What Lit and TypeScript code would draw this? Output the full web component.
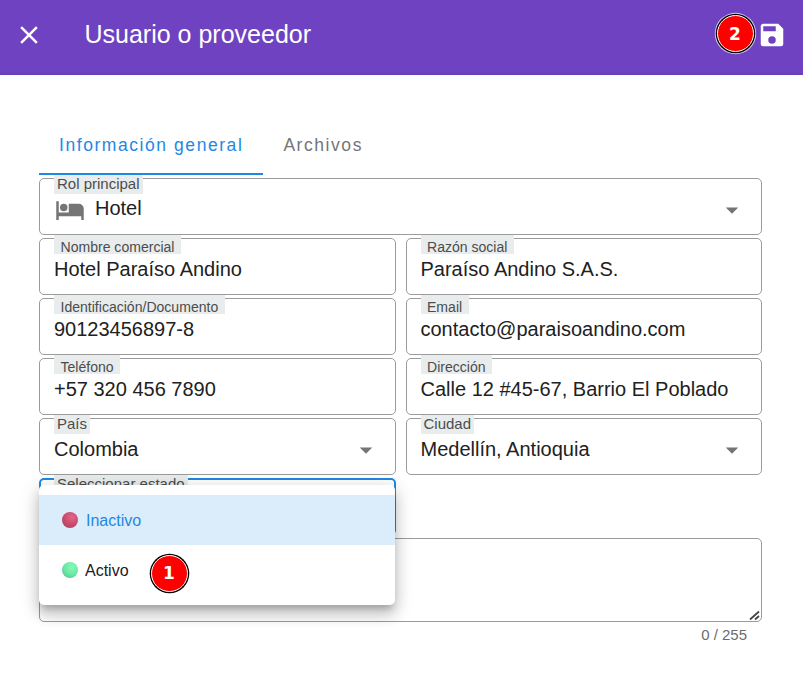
import { LitElement, html, css, svg } from "lit";
import { customElement, property } from "lit/decorators.js";
import { classMap } from "lit/directives/class-map.js";

const CLOSE =
  "M19,6.41L17.59,5L12,10.59L6.41,5L5,6.41L10.59,12L5,17.59L6.41,19L12,13.41L17.59,19L19,17.59L13.41,12L19,6.41Z";
const SAVE =
  "M15,9H5V5H15M12,19A3,3 0 0,1 9,16A3,3 0 0,1 12,13A3,3 0 0,1 15,16A3,3 0 0,1 12,19M17,3H5C3.89,3 3,3.9 3,5V19A2,2 0 0,0 5,21H19A2,2 0 0,0 21,19V7L17,3Z";
const BED =
  "M19,7H11V14H3V5H1V20H3V17H21V20H23V11A4,4 0 0,0 19,7M7,13A3,3 0 0,0 10,10A3,3 0 0,0 7,7A3,3 0 0,0 4,10A3,3 0 0,0 7,13Z";
const MENU_DOWN = "M7,10L12,15L17,10H7Z";

const icon = (d: string) =>
  html`<svg class="icon" width="30" height="30" viewBox="0 0 24 24">${svg`<path fill="currentColor" d=${d}></path>`}</svg>`;

@customElement("form-field")
class FormField extends LitElement {
  @property() label = "";
  @property() value = "";
  @property() icon = "";
  @property({ type: Boolean }) select = false;
  @property({ type: Boolean }) focused = false;

  static styles = css`
    :host { display: block; min-width: 0; }
    .field {
      box-sizing: border-box;
      position: relative;
      display: flex;
      height: 57px;
      padding: 0 14px;
      border: 1px solid #9b9b9b;
      border-radius: 5px;
      background: #fff;
    }
    .field.focused { border: 2px solid #1e88e5; padding: 0 13px; }
    .label {
      position: absolute;
      left: 14px;
      top: -4px;
      box-sizing: border-box;
      height: 19px;
      padding: 0 6.5px;
      background: #e8ecec;
      color: #4c4c4c;
      font-size: 14.05px;
      line-height: 25px;
      white-space: nowrap;
    }
    .select .label { padding: 0 3px; font-size: 15px; line-height: 18px; }
    .focused .label { left: 13px; top: -5px; }
    .value {
      flex: 1;
      margin-top: 18px;
      font-size: 20px;
      line-height: 24px;
      color: #212121;
      white-space: nowrap;
    }
    .icon { flex: none; display: block; color: #757575; }
    .lead { margin: 15.5px 10.5px 0 0.5px; }
    .lead + .value { margin-top: 17px; }
    .arrow { margin-top: 15.5px; }
  `;

  render() {
    return html`<div class=${classMap({ field: true, select: this.select, focused: this.focused })}>
      <span class="label">${this.label}</span>
      ${this.icon ? html`<span class="lead">${icon(this.icon)}</span>` : ""}
      <span class="value">${this.value}</span>
      ${this.select ? html`<span class="arrow">${icon(MENU_DOWN)}</span>` : ""}
    </div>`;
  }
}

@customElement("step-badge")
class StepBadge extends LitElement {
  static styles = css`
    :host {
      box-sizing: border-box;
      display: flex;
      align-items: center;
      justify-content: center;
      width: 37px;
      height: 37px;
      border: 1px solid #fff;
      border-radius: 50%;
      background: #f00;
      box-shadow: 0 0 0 1.3px #000;
      color: #fff;
      font: bold 17px/20px "DejaVu Sans", sans-serif;
    }
  `;
  render() {
    return html`<slot></slot>`;
  }
}

@customElement("app-root")
class AppRoot extends LitElement {
  static styles = css`
    :host {
      display: block;
      height: 686px;
      overflow: hidden;
      background: #fff;
      font-family: "Liberation Sans", Arial, sans-serif;
      color: #212121;
    }
    .bar {
      box-sizing: border-box;
      display: flex;
      align-items: center;
      height: 75px;
      padding: 0 16.5px 5px 14px;
      background: linear-gradient(#6f42c1 71px, #693db9 75px);
      color: #fff;
    }
    .icon { display: block; flex: none; }
    .title { flex: 1; margin: -2px 0 0 40.5px; font-size: 25px; line-height: 30px; }
    .bar step-badge { margin: -3px 3px 0 0; box-shadow: 0 0 0 1.3px #000, 0 0 0 2.2px #d8ccee; }
    .content { padding: 40px 41px 0 39px; }
    .tabs { display: flex; height: 60px; }
    .tab {
      box-sizing: border-box;
      padding: 0 20px;
      font-size: 17.5px;
      line-height: 60px;
      letter-spacing: 0.0893em;
      color: #757575;
    }
    .tab.active { color: #1e88e5; border-bottom: 2px solid #1e88e5; }
    .form {
      display: grid;
      grid-template-columns: 1fr 1fr;
      column-gap: 10px;
      row-gap: 3px;
      margin-top: 3px;
    }
    .wide { grid-column: 1 / -1; }
    .status { position: relative; }
    .menu {
      position: absolute;
      z-index: 2;
      left: 0;
      top: 7px;
      box-sizing: border-box;
      width: 356px;
      height: 120px;
      padding: 10px 0;
      border-radius: 5px;
      background: #fff;
      box-shadow: 0 6px 6px -3px rgba(0, 0, 0, 0.2), 0 10px 14px 1px rgba(0, 0, 0, 0.14),
        0 4px 18px 3px rgba(0, 0, 0, 0.12);
    }
    .option { display: flex; align-items: center; height: 50px; padding-left: 23px; font-size: 16px; line-height: 20px; }
    .option.selected { background: #dbecfa; color: #1e88e5; }
    .option.selected .dot { margin-right: 8px; }
    .text { padding-top: 2px; }
    .dot { width: 16px; height: 16px; margin-right: 7px; border-radius: 50%; }
    .inactive { background: radial-gradient(circle at 62% 32%, #e0688a, #cb4a6c 50%, #9f3a5c); }
    .active-dot { background: radial-gradient(circle at 62% 32%, #84fcb4, #6be8a4 50%, #55b08c); }
    .menu step-badge { position: absolute; left: 111.5px; top: 69.5px; }
    .notes {
      box-sizing: border-box;
      position: relative;
      height: 84px;
      border: 1px solid #9b9b9b;
      border-radius: 5px;
    }
    .grip { position: absolute; right: 0; bottom: 0; }
    .counter { margin: 4px 15px 0 0; text-align: right; font-size: 15px; line-height: 17px; color: #6c6c6c; }
  `;

  render() {
    return html`
      <header class="bar">
        ${icon(CLOSE)}
        <span class="title">Usuario o proveedor</span>
        <step-badge>2</step-badge>
        ${icon(SAVE)}
      </header>
      <main class="content">
        <nav class="tabs">
          <span class="tab active">Información general</span>
          <span class="tab">Archivos</span>
        </nav>
        <section class="form">
          <form-field class="wide" select label="Rol principal" value="Hotel" .icon=${BED}></form-field>
          <form-field label="Nombre comercial" value="Hotel Paraíso Andino"></form-field>
          <form-field label="Razón social" value="Paraíso Andino S.A.S."></form-field>
          <form-field label="Identificación/Documento" value="90123456897-8"></form-field>
          <form-field label="Email" value="contacto@paraisoandino.com"></form-field>
          <form-field label="Teléfono" value="+57 320 456 7890"></form-field>
          <form-field label="Dirección" value="Calle 12 #45-67, Barrio El Poblado"></form-field>
          <form-field select label="País" value="Colombia"></form-field>
          <form-field select label="Ciudad" value="Medellín, Antioquia"></form-field>
          <div class="status">
            <form-field select focused label="Seleccionar estado"></form-field>
            <div class="menu">
              <div class="option selected"><span class="dot inactive"></span><span class="text">Inactivo</span></div>
              <div class="option"><span class="dot active-dot"></span><span class="text">Activo</span></div>
              <step-badge>1</step-badge>
            </div>
          </div>
          <div class="wide notes">
            <svg class="grip" width="12" height="11" viewBox="0 0 12 11" fill="none" stroke="#444" stroke-width="1.7">
              <path d="M1 9.5L10 1.5M6 9.5L10 6"></path>
            </svg>
          </div>
        </section>
        <div class="counter">0 / 255</div>
      </main>
    `;
  }
}
